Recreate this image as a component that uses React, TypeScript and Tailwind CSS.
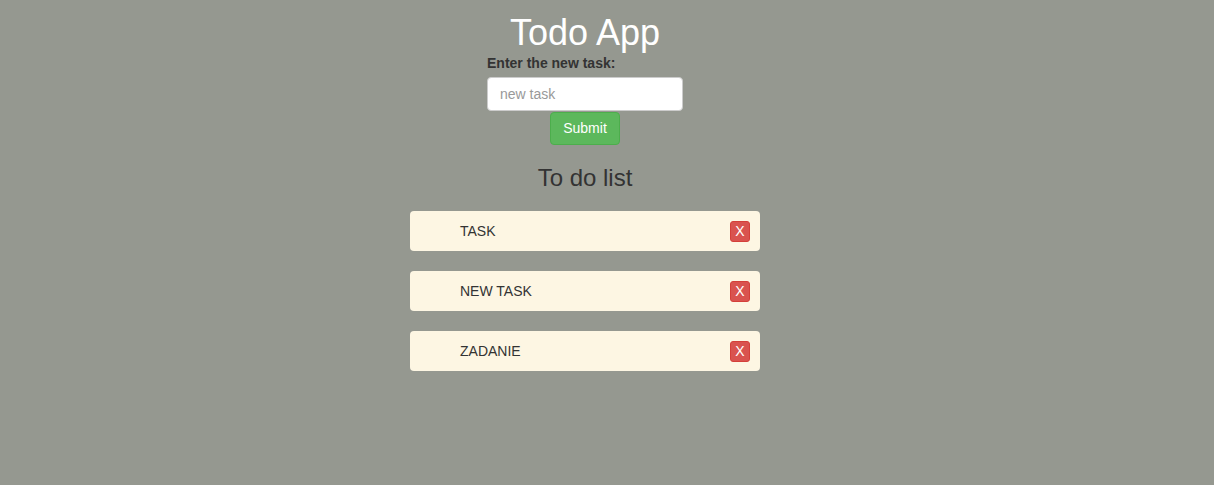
import { useState } from "react";

const App = () => {
  const [tasks] = useState(["TASK", "NEW TASK", "ZADANIE"]);

  return (
    <div className="min-h-[485px] w-full bg-[#959890] font-['Liberation_Sans',Arial,sans-serif] text-[14px] text-[#333]">
      <div className="ml-[410px] flex w-[350px] flex-col items-center">
        <h1 className="mt-[13px] text-[36px] leading-[40px] text-white">Todo App</h1>
        <form className="flex flex-col items-center" onSubmit={(e) => e.preventDefault()}>
          <label className="block w-[196px] text-[14px] font-bold leading-[20px] text-[#333]">
            Enter the new task:
          </label>
          <input
            placeholder="new task"
            className="mt-[4px] h-[34px] w-[196px] rounded-[4px] border border-[#ccc] bg-white px-3 text-[14px] text-[#555] placeholder:text-[#999] outline-none"
          />
          <button
            type="submit"
            className="mt-[1px] h-[33px] w-[70px] rounded-[4px] border border-[#4cae4c] bg-[#5cb85c] text-[14px] text-white"
          >
            Submit
          </button>
        </form>
        <h3 className="mt-[20px] text-[24px] leading-[26px] text-[#333]">To do list</h3>
        <ul className="mt-[20px] flex w-full flex-col gap-5">
          {tasks.map((t, id) => (
            <li
              key={id}
              className="flex h-[40px] items-center justify-between rounded-[4px] bg-[#fdf6e3] pl-[50px] pr-[10px]"
            >
              <span className="text-[14px] text-[#333]">{t}</span>
              <button className="flex h-[21px] w-[20px] items-center justify-center rounded-[3px] border border-[#d43f3a] bg-[#d9534f] text-[14px] leading-none text-white">
                X
              </button>
            </li>
          ))}
        </ul>
      </div>
    </div>
  );
};

export default App;
